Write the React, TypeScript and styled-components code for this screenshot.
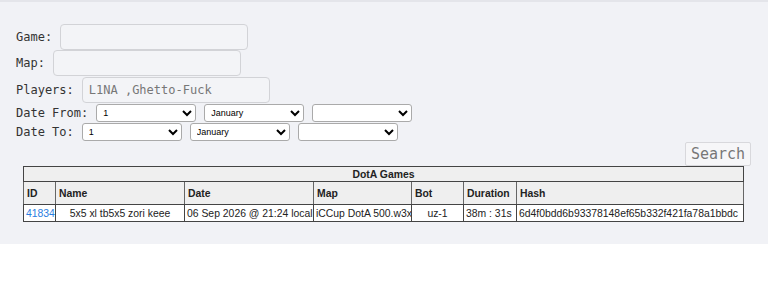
import * as React from 'react'
import styled, { createGlobalStyle } from 'styled-components';

const GlobalStyle = createGlobalStyle`
    html, body {
        margin: 0;
        padding: 0;
        background: #ffffff;
    }
`

const games = [
    {
        id: '41834',
        name: '5x5 xl tb5x5 zori keee',
        date: '06 Sep 2026 @ 21:24 local',
        map: 'iCCup DotA 500.w3x',
        bot: 'uz-1',
        duration: '38m : 31s',
        hash: '6d4f0bdd6b93378148ef65b332f421fa78a1bbdc',
    },
]

const days = Array.from({ length: 31 }, (_, i) => String(i + 1))
const months = ['January', 'February', 'March', 'April', 'May', 'June', 'July', 'August', 'September', 'October', 'November', 'December']

export default class App extends React.Component<any, {}> {
    renderDate(label: string) {
        return (
            <Row>
                <Label>{label}</Label>
                <Select defaultValue="1">
                    {days.map(d => <option key={d}>{d}</option>)}
                </Select>
                <Select defaultValue="January">
                    {months.map(m => <option key={m}>{m}</option>)}
                </Select>
                <Select defaultValue="">
                    <option value=""></option>
                </Select>
            </Row>
        )
    }

    render() {
        return (
            <>
                <GlobalStyle />
                <Panel>
                    <Form>
                        <Row height={27}>
                            <Label>Game:</Label>
                            <TextInput />
                        </Row>
                        <Row height={26}>
                            <Label>Map:</Label>
                            <TextInput />
                        </Row>
                        <Row height={27}>
                            <Label>Players:</Label>
                            <TextInput defaultValue="L1NA ,Ghetto-Fuck" />
                        </Row>
                        {this.renderDate('Date From:')}
                        {this.renderDate('Date To:')}
                    </Form>
                    <ButtonBar>
                        <SearchButton>Search</SearchButton>
                    </ButtonBar>
                    <Games>
                        <colgroup>
                            <col style={{ width: 32 }} />
                            <col style={{ width: 129 }} />
                            <col style={{ width: 129 }} />
                            <col style={{ width: 98 }} />
                            <col style={{ width: 52 }} />
                            <col style={{ width: 53 }} />
                            <col />
                        </colgroup>
                        <thead>
                            <tr>
                                <Caption colSpan={7}>DotA Games</Caption>
                            </tr>
                            <tr>
                                <Th>ID</Th>
                                <Th>Name</Th>
                                <Th>Date</Th>
                                <Th>Map</Th>
                                <Th>Bot</Th>
                                <Th>Duration</Th>
                                <Th>Hash</Th>
                            </tr>
                        </thead>
                        <tbody>
                            {games.map(g => (
                                <tr key={g.id}>
                                    <Td><GameLink href="#">{g.id}</GameLink></Td>
                                    <Td center>{g.name}</Td>
                                    <Td>{g.date}</Td>
                                    <Td>{g.map}</Td>
                                    <Td center>{g.bot}</Td>
                                    <Td>{g.duration}</Td>
                                    <Td>{g.hash}</Td>
                                </tr>
                            ))}
                        </tbody>
                    </Games>
                </Panel>
            </>
        )
    }
}

const Panel = styled.section`
    background: #f1f2f6;
    border-top: 2px solid #e4e5ea;
    padding: 21px 17px 22px 16px;
    height: 244px;
    box-sizing: border-box;
`

const Form = styled.div`
    display: flex;
    flex-direction: column;
`

const Row = styled.div<{ height?: number }>`
    display: flex;
    align-items: center;
    gap: 8px;
    height: ${p => p.height || 19}px;
`

const Label = styled.label`
    font-family: "DejaVu Sans Mono", monospace;
    font-size: 12px;
    color: #333;
`

const TextInput = styled.input`
    width: 188px;
    height: 26px;
    box-sizing: border-box;
    border: 1px solid #d2d3d7;
    border-radius: 4px;
    background: #f3f4f7;
    padding: 0 6px;
    font-family: "DejaVu Sans Mono", monospace;
    font-size: 12px;
    color: #777;
    outline: none;
`

const Select = styled.select`
    width: 100px;
    height: 18px;
    font-family: "Liberation Sans", Arial, sans-serif;
    font-size: 9px;
    border: 1px solid #aaa;
    border-radius: 3px;
    background: #fff;
    padding: 0 2px;
`

const ButtonBar = styled.div`
    display: flex;
    justify-content: flex-end;
    margin-top: 1px;
`

const SearchButton = styled.button`
    width: 66px;
    height: 24px;
    font-family: "DejaVu Sans Mono", monospace;
    font-size: 15px;
    color: #777;
    background: #f6f6f8;
    border: 1px solid #d8d8dc;
    border-radius: 2px;
    padding: 0;
`

const Games = styled.table`
    margin-left: 7px;
    width: 721px;
    border-collapse: collapse;
    table-layout: fixed;
    font-family: "Liberation Sans", Arial, sans-serif;
    font-size: 10.4px;
    color: #222;
    border: 1px solid #444;
`

const Caption = styled.th`
    background: #efefef;
    font-weight: bold;
    text-align: center;
    height: 14px;
    padding: 0;
    border: 1px solid #444;
`

const Th = styled.th`
    background: #efefef;
    font-weight: bold;
    text-align: left;
    height: 22px;
    padding: 0 3px;
    border: 1px solid #666;
    border-bottom-color: #444;
    white-space: nowrap;
`

const Td = styled.td<{ center?: boolean }>`
    background: #fff;
    text-align: ${p => (p.center ? 'center' : 'left')};
    height: 16px;
    padding: 0 2px;
    border: 1px solid #444;
    white-space: nowrap;
    overflow: hidden;
`

const GameLink = styled.a`
    color: #2a7de1;
    text-decoration: none;
`
